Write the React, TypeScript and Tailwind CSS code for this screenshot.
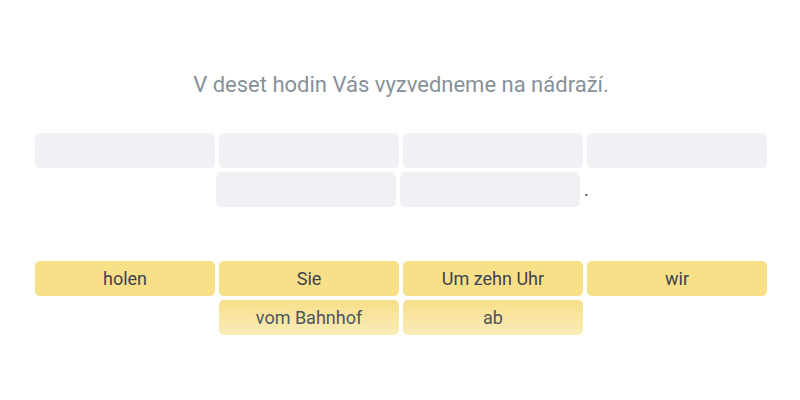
import React from "react";

const words = ["holen", "Sie", "Um zehn Uhr", "wir", "vom Bahnhof", "ab"];

export default function App() {
  return (
    <div
      className="w-[800px] h-[400px] bg-white flex flex-col items-center"
      style={{ fontFamily: "Roboto, 'Noto Sans', sans-serif" }}
    >
      <h1 className="mt-[71px] text-[22px] leading-[28px] text-[#87919a] pl-[2px]">
        V deset hodin Vás vyzvedneme na nádraží.
      </h1>

      {/* answer slots */}
      <div className="mt-[34px] w-[732px] ml-[2px] flex flex-wrap justify-center items-center gap-[4px]">
        {Array.from({ length: 6 }, (_, i) => (
          <div key={i} className="w-[180px] h-[35px] rounded-[5px] bg-[#f0f1f5]" />
        ))}
        <span className="text-[18px] leading-none text-[#374151] w-[2px] overflow-visible">.</span>
      </div>

      {/* word bank */}
      <div className="mt-[54px] w-[732px] ml-[2px] flex flex-wrap justify-center gap-[4px]">
        {words.map((w, i) => (
          <button
            key={w}
            className={
              i < 4
                ? "w-[180px] h-[35px] rounded-[5px] bg-[#f8df88] text-[18px] text-[#3b4450]"
                : "w-[180px] h-[35px] rounded-[5px] bg-linear-to-b from-[#f8df88] to-[#f9ecb8] text-[18px] text-[#4d5561]"
            }
          >
            {w}
          </button>
        ))}
      </div>
    </div>
  );
}
